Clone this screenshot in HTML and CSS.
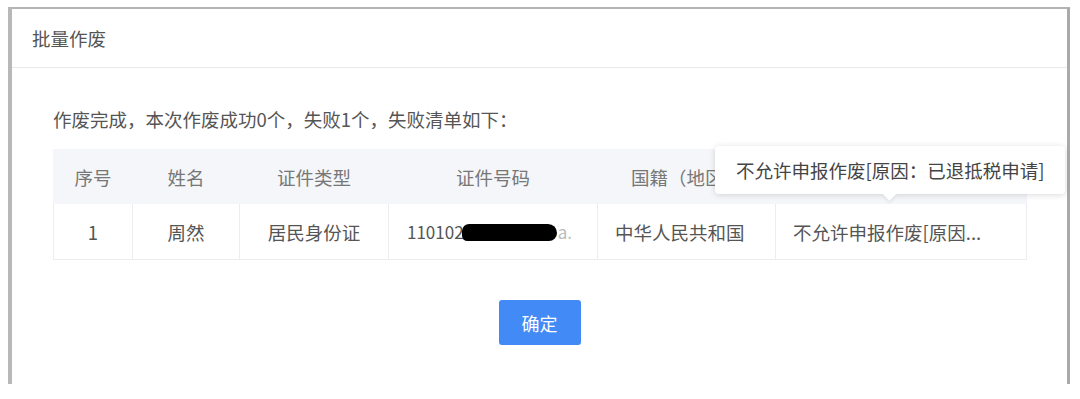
FILE: index.html
```html
<!DOCTYPE html>
<html lang="zh-CN">
<head>
  <meta charset="UTF-8" />
  <title>批量作废</title>
  <link rel="stylesheet" href="styles.css">
</head>
<body>

  <div class="dialog">
    <header class="dialog-head">批量作废</header>

    <main class="dialog-body">
      <p class="summary">作废完成，本次作废成功0个，失败1个，失败清单如下：</p>

      <div class="table-wrap">
        <table class="fail-list">
          <colgroup>
            <col style="width:79px">
            <col style="width:107px">
            <col style="width:149px">
            <col style="width:209px">
            <col style="width:178px">
            <col style="width:251px">
          </colgroup>
          <thead>
            <tr>
              <th>序号</th>
              <th>姓名</th>
              <th>证件类型</th>
              <th>证件号码</th>
              <th>国籍（地区）</th>
              <th></th>
            </tr>
          </thead>
          <tbody>
            <tr>
              <td class="center">1</td>
              <td class="center">周然</td>
              <td class="center">居民身份证</td>
              <td class="id">110102<span class="redact"></span><span class="faint">a.</span></td>
              <td>中华人民共和国</td>
              <td>不允许申报作废[原因...</td>
            </tr>
          </tbody>
        </table>

        <div class="tooltip">不允许申报作废[原因：已退抵税申请]</div>
      </div>

      <div class="actions">
        <button class="btn-ok">确定</button>
      </div>
    </main>
  </div>

</body>
</html>
```

FILE: styles.css
```css
body {
  margin: 0;
  background: #fff;
  font-family: "Noto Sans CJK SC", "Noto Sans", sans-serif;
  color: #555;
}

.dialog {
  margin: 7px 10px 0 8px;
  height: 377px;
  background: #fff;
  border-top: 2px solid #b4b4b4;
  border-left: 4px solid #b8b8b8;
  border-right: 3px solid #aaa;
  box-sizing: border-box;
}

.dialog-head {
  height: 59px;
  padding-left: 20px;
  display: flex;
  align-items: center;
  font-size: 18.5px;
  color: #555;
  border-bottom: 1px solid #e9e9e9;
  box-sizing: border-box;
}

.dialog-body {
  padding: 39px 0 0 41px;
}

.summary {
  margin: 0 0 18px;
  font-size: 18.5px;
  line-height: 24px;
  color: #555;
}

.table-wrap {
  position: relative;
  width: 973px;
}

.fail-list {
  width: 973px;
  border-collapse: collapse;
  table-layout: fixed;
  font-size: 18.5px;
}

.fail-list th {
  height: 51px;
  background: #f4f6f9;
  color: #777;
  font-weight: normal;
  text-align: center;
  border: 1px solid #f4f6f9;
  white-space: nowrap;
  overflow: hidden;
}

.fail-list td {
  height: 55px;
  padding: 0 14px 0 17px;
  color: #555;
  border: 1px solid #ebedf1;
  white-space: nowrap;
  overflow: hidden;
}

.fail-list td.center {
  text-align: center;
  padding: 0;
}

.fail-list td.id {
  padding-left: 18px;
  font-size: 17px;
}

.redact {
  display: inline-block;
  width: 95px;
  height: 17px;
  margin-left: -2px;
  vertical-align: -2px;
  background: #000;
  border-radius: 8px 10px 9px 6px;
}

.faint {
  color: #bbb;
  margin-left: 1px;
}

.tooltip {
  position: absolute;
  left: 662px;
  top: -3px;
  width: 350px;
  height: 48px;
  padding-left: 21px;
  box-sizing: border-box;
  display: flex;
  align-items: center;
  background: #fff;
  color: #444;
  font-size: 18.5px;
  white-space: nowrap;
  border-radius: 4px;
  box-shadow: 0 1px 6px rgba(0, 0, 0, 0.15);
}

.tooltip::after {
  content: "";
  position: absolute;
  left: 170px;
  bottom: -5px;
  width: 9px;
  height: 9px;
  background: #fff;
  transform: rotate(45deg);
  box-shadow: 2px 2px 3px rgba(0, 0, 0, 0.06);
}

.actions {
  display: flex;
  justify-content: center;
  margin: 40px 0 0 -41px;
}

.btn-ok {
  width: 82px;
  height: 45px;
  background: #428af6;
  color: #fff;
  font-family: inherit;
  font-size: 18px;
  border: none;
  border-radius: 3px;
  cursor: pointer;
}
```
